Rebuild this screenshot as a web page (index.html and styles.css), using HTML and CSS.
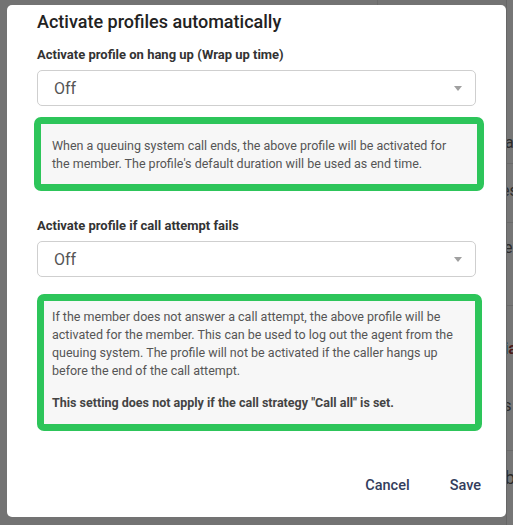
FILE: index.html
```html
<!DOCTYPE html>
<html>
<head>
<meta charset="utf-8">
<link rel="stylesheet" href="styles.css">
</head>
<body>
<div class="page">
  <div class="topline"></div>
  <div class="dialog">
    <h2 class="title">Activate profiles automatically</h2>
    <div class="label label-first">Activate profile on hang up (Wrap up time)</div>
    <div class="select">
      <span class="value">Off</span>
      <span class="arrow"></span>
    </div>
    <div class="info info-first">
      <p>When a queuing system call ends, the above profile will be activated for the member. The profile's default duration will be used as end time.</p>
    </div>
    <div class="label label-second">Activate profile if call attempt fails</div>
    <div class="select">
      <span class="value">Off</span>
      <span class="arrow"></span>
    </div>
    <div class="info info-second">
      <p>If the member does not answer a call attempt, the above profile will be activated for the member. This can be used to log out the agent from the queuing system. The profile will not be activated if the caller hangs up before the end of the call attempt.</p>
      <p class="strong">This setting does not apply if the call strategy "Call all" is set.</p>
    </div>
    <div class="actions">
      <button class="btn">Cancel</button>
      <button class="btn">Save</button>
    </div>
  </div>
  <div class="behind">
    <div class="hline h1"></div>
    <div class="hline h2"></div>
    <div class="hline h3"></div>
    <div class="hline h4"></div>
    <div class="row r1">ac</div>
    <div class="row r2">es</div>
    <div class="row r3">e</div>
    <div class="row r4"><span class="blue">i</span><span class="red">af</span></div>
    <div class="row r5">'s</div>
    <div class="row r6">b</div>
  </div>
</div>
</body>
</html>
```

FILE: styles.css
```css
* { box-sizing: border-box; }
html, body { margin: 0; padding: 0; }
body {
  width: 513px;
  height: 525px;
  overflow: hidden;
  background: #737373;
  font-family: Roboto, "Liberation Sans", sans-serif;
}
.page {
  position: relative;
  display: flex;
  padding: 5px 0 0 7px;
  height: 525px;
}
.topline {
  position: absolute;
  left: 377px;
  top: 0;
  width: 1px;
  height: 5px;
  background: #6a6a6a;
}
.dialog {
  width: 499px;
  height: 512px;
  background: #fff;
  border-radius: 5px;
  padding: 5px 30px 0 30px;
  display: flex;
  flex-direction: column;
  flex-shrink: 0;
}
.title {
  margin: 0;
  font-size: 18px;
  line-height: 24px;
  font-weight: 500;
  color: #222;
}
.label {
  font-size: 13px;
  line-height: 18px;
  font-weight: 700;
  color: #333;
}
.label-first { margin-top: 12px; }
.label-second { margin-top: 26px; }
.select {
  margin-top: 6px;
  height: 36px;
  border: 1px solid #cfcfcf;
  border-radius: 5px;
  display: flex;
  align-items: center;
  justify-content: space-between;
  padding: 0 13px 0 16px;
}
.value {
  font-size: 16px;
  color: #555;
}
.arrow {
  width: 0;
  height: 0;
  border-left: 4.5px solid transparent;
  border-right: 4.5px solid transparent;
  border-top: 5px solid #a0a0a0;
}
.info {
  border: 7px solid #2dc55a;
  border-radius: 7px;
  background: #f7f7f7;
  font-size: 12.5px;
  line-height: 18px;
  color: #555;
}
.info p { margin: 0; }
.info-first {
  margin: 11px -8px 0 -3px;
  padding: 13px 30px 11px 11px;
}
.info-second {
  margin: 17px -6px 0 0;
  padding: 7px 10px 12px 8px;
}
.info .strong {
  margin-top: 14px;
  font-weight: 700;
  color: #444;
}
.actions {
  margin-top: 36px;
  margin-right: -13px;
  display: flex;
  justify-content: flex-end;
  gap: 24px;
}
.btn {
  background: none;
  border: none;
  height: 36px;
  padding: 0 8px;
  font-family: Roboto, "Liberation Sans", sans-serif;
  font-size: 14.5px;
  font-weight: 500;
  color: #333d5c;
  cursor: pointer;
}
.behind {
  flex: 1;
  position: relative;
  overflow: hidden;
  border-left: 1px solid #666;
  background: #767676;
  margin-top: -5px;
  color: #2c2c2c;
  font-size: 16px;
}
.hline {
  position: absolute;
  left: 0;
  right: 0;
  height: 1px;
  background: #6a6a6a;
}
.h1 { top: 163px; }
.h2 { top: 222px; }
.h3 { top: 305px; }
.h4 { top: 450px; }
.row {
  position: absolute;
  left: 0;
  line-height: 19px;
  white-space: nowrap;
}
.r1 { top: 133px; left: -2px; }
.r2 { top: 181px; left: -6px; }
.r3 { top: 238px; left: -3px; }
.r4 { top: 339px; left: -3px; font-weight: 700; }
.r5 { top: 396px; left: -6px; }
.r6 { top: 467px; left: -2px; font-size: 18px; line-height: 21px; }
.blue { color: #1d2b4d; }
.red { color: #4a1a1a; }
```
